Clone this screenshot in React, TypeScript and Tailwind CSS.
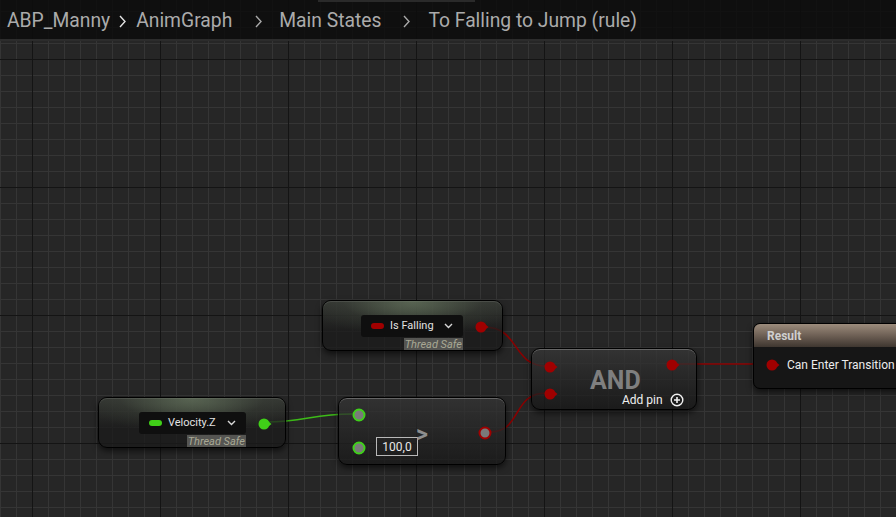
import React from "react"

const font = { fontFamily: "Roboto, 'Noto Sans', sans-serif" }

function Grid() {
  return (
    <svg className="absolute inset-0" width="896" height="517">
      <defs>
        <pattern id="minor" x="0" y="11" width="16" height="16" patternUnits="userSpaceOnUse">
          <path d="M0.5 0 V16 M0 0.5 H16" stroke="#353535" strokeWidth="1" />
        </pattern>
        <pattern id="major" x="32" y="59" width="128" height="128" patternUnits="userSpaceOnUse">
          <path d="M0.5 0 V128 M0 0.5 H128" stroke="#141414" strokeWidth="1" />
        </pattern>
      </defs>
      <rect width="896" height="517" fill="#262626" />
      <rect width="896" height="517" fill="url(#minor)" />
      <rect width="896" height="517" fill="url(#major)" />
    </svg>
  )
}

function Wires() {
  return (
    <svg className="absolute inset-0 pointer-events-none" width="896" height="517">
      <path d="M484 327 C 520 327, 512 366, 546 366" stroke="#8a0000" strokeWidth="1.6" fill="none" />
      <path d="M490 432 C 522 432, 512 393, 546 393" stroke="#8a0000" strokeWidth="1.6" fill="none" />
      <path d="M678 364 L 770 364" stroke="#8a0000" strokeWidth="1.6" fill="none" />
      <path d="M266 422 C 305 422, 312 414, 352 414" stroke="#3dbb18" strokeWidth="1.6" fill="none" />
    </svg>
  )
}

function FilledPin({ color }: { color: string }) {
  return (
    <svg width="14" height="12" viewBox="0 0 14 12">
      <circle cx="6" cy="6" r="5.5" fill={color} />
      <path d="M11 4 L13.5 6 L11 8 Z" fill={color} />
    </svg>
  )
}

function RingPin({ color }: { color: string }) {
  return (
    <svg width="14" height="14" viewBox="0 0 14 14">
      <circle cx="7" cy="7" r="5.5" fill="#7a7a7a" stroke={color} strokeWidth="2" />
    </svg>
  )
}

function Chevron() {
  return (
    <svg width="9" height="6" viewBox="0 0 9 6">
      <path d="M1 1 L4.5 4.5 L8 1" stroke="#d8d8d8" strokeWidth="1.4" fill="none" />
    </svg>
  )
}

function Crumb({ color }: { color: string }) {
  return (
    <svg width="7" height="13" viewBox="0 0 7 13">
      <path d="M1 1 L6 6.5 L1 12" stroke={color} strokeWidth="1.4" fill="none" />
    </svg>
  )
}

function VarNode({ left, top, width, label, color, pillWidth }: { left: number; top: number; width: number; label: string; color: string; pillWidth: number }) {
  return (
    <div
      className="absolute h-[51px] rounded-[9px] border border-black bg-[#1b1b1b]/75 shadow-[0_3px_6px_rgba(0,0,0,0.6),inset_0_1px_0_rgba(255,255,255,0.22)] overflow-hidden"
      style={{ left, top, width }}
    >
      <div className="absolute inset-x-0 top-0 h-[30px] bg-[radial-gradient(ellipse_at_top,rgba(150,180,135,0.6),rgba(60,70,55,0.25)_55%,transparent_85%)]" />
      <div className="absolute inset-x-0 top-0 h-[30px] bg-gradient-to-b from-[#4a4f47]/50 to-transparent" />
      <div className="relative flex h-full items-start">
        <div className="flex-1" />
        <div className="flex flex-col items-end pt-[14px]">
          <div
            className="flex h-[22px] items-center gap-[6px] rounded-[3px] bg-[#0f0f0f] pl-[10px] pr-[10px]"
            style={{ width: pillWidth }}
          >
            <span className="h-[6px] w-[13px] rounded-full" style={{ background: color }} />
            <span className="text-[11px] text-[#e2e2e2]">{label}</span>
            <span className="ml-auto">
              <Chevron />
            </span>
          </div>
          <div className="mt-[1px] flex h-[12px] items-center bg-[#555552] px-[1px] text-[11px] italic leading-none text-[#a8a894]">
            Thread Safe
          </div>
        </div>
        <div className="ml-[12px] mr-[13px] pt-[20px]">
          <FilledPin color={color} />
        </div>
      </div>
    </div>
  )
}

export default function App() {
  return (
    <div className="relative h-[517px] w-[896px] overflow-hidden bg-[#262626]" style={font}>
      <Grid />
      <Wires />

      <div className="relative z-10 flex h-[39px] items-center bg-[#0c0c0c]/85 pl-[7px] pt-[3px] text-[19.3px] text-[#ababab] shadow-[0_2px_0_#2c2c2c]">
        <div className="absolute left-[318px] top-0 h-[2px] w-[157px] bg-[#2a2a2a]" />
        <span>ABP_Manny</span>
        <span className="ml-[9px] mr-[10px]">
          <Crumb color="#e4e4e4" />
        </span>
        <span>AnimGraph</span>
        <span className="ml-[23px] mr-[17px]">
          <Crumb color="#a9a9a9" />
        </span>
        <span>Main States</span>
        <span className="ml-[22px] mr-[18px]">
          <Crumb color="#a9a9a9" />
        </span>
        <span>To Falling to Jump (rule)</span>
      </div>

      <VarNode left={322} top={300} width={181} label="Is Falling" color="#a00000" pillWidth={102} />
      <VarNode left={98} top={397} width={188} label="Velocity.Z" color="#40d018" pillWidth={107} />

      {/* compare node */}
      <div className="absolute left-[338px] top-[397px] h-[68px] w-[168px] rounded-[9px] border border-black bg-gradient-to-b from-[#353535]/75 to-[#181818]/75 shadow-[0_3px_6px_rgba(0,0,0,0.6),inset_0_1px_0_rgba(255,255,255,0.25)]">
        <div className="absolute left-[13px] top-[10px] flex flex-col gap-[19px]">
          <RingPin color="#3fd11a" />
          <RingPin color="#3fd11a" />
        </div>
        <div className="absolute left-[37px] top-[39px] flex h-[19px] w-[42px] items-center justify-center border border-[#b8b8b8] text-[12px] text-[#e8e8e8]">
          100,0
        </div>
        <div className="absolute left-[77px] top-[25px] text-[23px] font-bold leading-none text-[#8e8e8e]">&gt;</div>
        <div className="absolute left-[139px] top-[28px]">
          <RingPin color="#a00000" />
        </div>
      </div>

      {/* AND node */}
      <div className="absolute left-[531px] top-[348px] h-[62px] w-[166px] rounded-[9px] border border-black bg-gradient-to-b from-[#373737]/75 to-[#171717]/75 shadow-[0_3px_6px_rgba(0,0,0,0.6),inset_0_1px_0_rgba(255,255,255,0.25)]">
        <div className="absolute left-[12px] top-[12px] flex flex-col gap-[15px]">
          <FilledPin color="#a00000" />
          <FilledPin color="#a00000" />
        </div>
        <div className="absolute right-[16px] top-[10px]">
          <FilledPin color="#a00000" />
        </div>
        <div className="absolute left-[58px] top-[19px] text-[25px] font-bold leading-none text-[#7f7f7f]">AND</div>
        <div className="absolute left-[90px] top-[42px] flex items-center gap-[7px] text-[12px] text-[#f0f0f0]">
          <span>Add pin</span>
          <svg width="14" height="14" viewBox="0 0 14 14">
            <circle cx="7" cy="7" r="5.8" stroke="#f0f0f0" strokeWidth="1.4" fill="none" />
            <path d="M7 4 V10 M4 7 H10" stroke="#f0f0f0" strokeWidth="1.6" />
          </svg>
        </div>
      </div>

      {/* result node */}
      <div className="absolute left-[753px] top-[323px] h-[66px] w-[170px] overflow-hidden rounded-[7px] border border-black bg-[#161616] shadow-[0_3px_6px_rgba(0,0,0,0.6)]">
        <div className="flex h-[23px] items-center bg-gradient-to-b from-[#9c8c7c] via-[#6e6055] to-[#3f3730] pl-[13px] text-[12px] font-bold text-[#cfcfcf]">
          Result
        </div>
        <div className="mt-[9px] flex items-center gap-[7px] pl-[12px] text-[12px] text-[#ececec]">
          <FilledPin color="#a00000" />
          <span className="whitespace-nowrap">Can Enter Transition</span>
        </div>
      </div>
    </div>
  )
}
